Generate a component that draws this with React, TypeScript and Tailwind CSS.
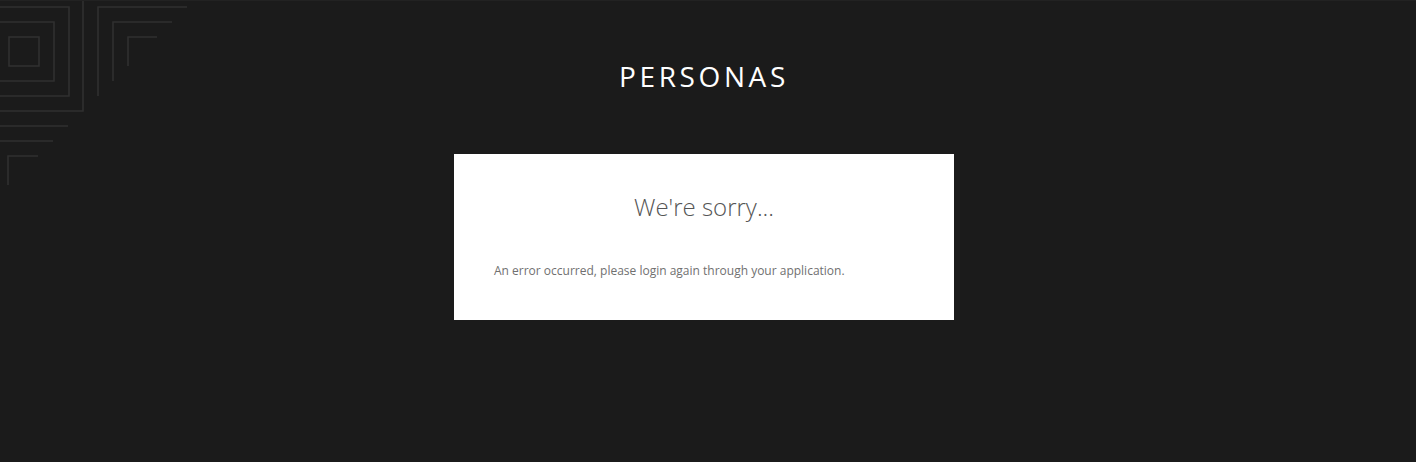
import React from 'react';

function CornerPattern() {
  return (
    <svg className="absolute left-0 top-0" width="200" height="200" viewBox="0 0 200 200" fill="none">
      <g stroke="#303030" strokeWidth="1.6">
        <path d="M83 0 V110 H0" />
        <path d="M0 6 H69 V95 H0" />
        <path d="M0 21 H54 V80 H0" />
        <rect x="9" y="36" width="30" height="29" />
        <path d="M98 95 V6 H187" />
        <path d="M113 80 V21 H172" />
        <path d="M128 65 V36 H157" />
        <path d="M0 125 H68" />
        <path d="M0 140 H53" />
        <path d="M8 184 V155 H38" />
      </g>
    </svg>
  );
}

export default function App() {
  return (
    <div className="relative h-[462px] w-full overflow-hidden bg-[#1b1b1b] border-t border-[#222]" style={{ fontFamily: '"Open Sans", sans-serif' }}>
      <CornerPattern />
      <div className="relative flex flex-col items-center pr-2">
        <h1 className="mt-[55px] text-[28px] leading-[40px] tracking-[3.6px] text-white font-normal">PERSONAS</h1>
        <div className="mt-[58px] w-[500px] h-[166px] bg-white px-10 pt-[36px]">
          <h2 className="text-center text-[24px] leading-[33px] font-light text-[#555]">We're sorry...</h2>
          <p className="mt-[39px] text-[12px] leading-[18px] text-[#707070]">
            An error occurred, please login again through your application.
          </p>
        </div>
      </div>
    </div>
  );
}
